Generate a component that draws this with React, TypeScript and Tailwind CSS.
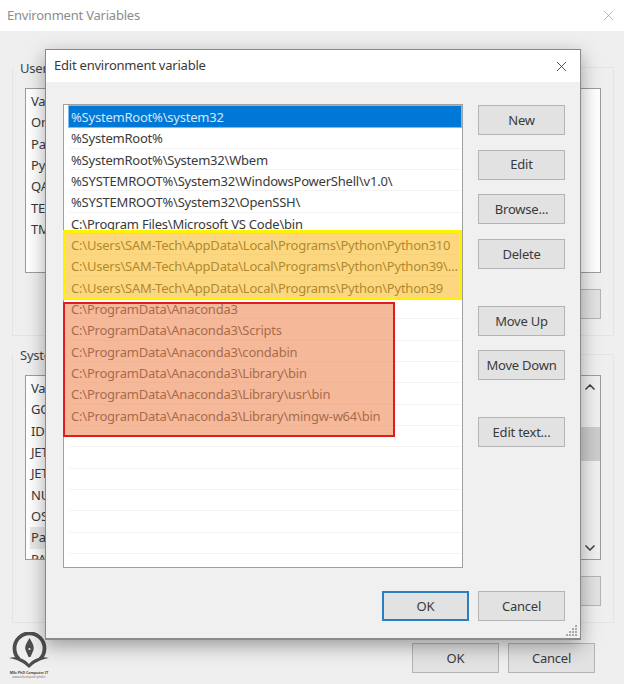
import { X, ChevronUp, ChevronDown } from 'lucide-react';

const pathRows = [
  '%SystemRoot%\\system32',
  '%SystemRoot%',
  '%SystemRoot%\\System32\\Wbem',
  '%SYSTEMROOT%\\System32\\WindowsPowerShell\\v1.0\\',
  '%SYSTEMROOT%\\System32\\OpenSSH\\',
  'C:\\Program Files\\Microsoft VS Code\\bin',
  'C:\\Users\\SAM-Tech\\AppData\\Local\\Programs\\Python\\Python310',
  'C:\\Users\\SAM-Tech\\AppData\\Local\\Programs\\Python\\Python39\\Scripts\\',
  'C:\\Users\\SAM-Tech\\AppData\\Local\\Programs\\Python\\Python39',
  'C:\\ProgramData\\Anaconda3',
  'C:\\ProgramData\\Anaconda3\\Scripts',
  'C:\\ProgramData\\Anaconda3\\condabin',
  'C:\\ProgramData\\Anaconda3\\Library\\bin',
  'C:\\ProgramData\\Anaconda3\\Library\\usr\\bin',
  'C:\\ProgramData\\Anaconda3\\Library\\mingw-w64\\bin',
  '', '', '', '', '', '',
];

const userVars = ['Variable', 'OneDrive', 'Path', 'PyCharm', 'QA', 'TEMP', 'TMP'];
const systemVars = ['Variable', 'GOPATH', 'IDEA', 'JETBRAINS', 'JETTY', 'NUMBER', 'OS', 'Path', 'PATHEXT'];

function WinButton({ label, primary, className = '' }: { label: string; primary?: boolean; className?: string }) {
  return (
    <div
      className={`flex h-[30px] w-[87px] shrink-0 items-center justify-center bg-[#e2e2e2] pt-[1px] text-[13px] tracking-[-0.22px] text-[#3a3a3a] ${
        primary ? 'border-2 border-[#2a7fc0]' : 'border border-[#b4b4b4]'
      } ${className}`}
    >
      {label}
    </div>
  );
}

function Group({ title, vars, listH, children }: { title: string; vars: string[]; listH: string; children?: React.ReactNode }) {
  return (
    <div className="relative h-[269px] border border-[#e4e4e4] px-[12px]">
      <div className="-ml-[12px] -mt-[9px] h-[18px] w-fit bg-[#efefef] px-[7px] text-[13px] leading-[18px] tracking-[-0.22px] text-[#444]">{title}</div>
      <div className={`mt-[11px] overflow-hidden border border-[#9c9c9c] bg-white pl-[4px] pt-[2px] ${listH}`}>
        {vars.map((v, i) => (
          <div key={i} className={`h-[21.33px] pl-[1px] text-[13px] leading-[21px] tracking-[-0.22px] text-[#3a3a3a] ${v === 'Path' && title === 'System variables' ? 'bg-[#e9e9e9]' : ''}`}>
            {v}
          </div>
        ))}
        {children}
      </div>
      <div className="mt-[16px] flex justify-end gap-[9px]">
        <WinButton label="New..." />
        <WinButton label="Edit..." />
        <WinButton label="Delete" />
      </div>
    </div>
  );
}

function Logo() {
  return (
    <div className="absolute left-[8px] top-[632px] flex w-[42px] flex-col items-center text-[#4a4a4a]">
      <svg width="42" height="37" viewBox="0 0 42 37" fill="none">
        <path d="M11 27 A15 15 0 1 1 32 27" stroke="#4d4d4d" strokeWidth="3.8" />
        <path d="M21.5 6 C24.5 11 26.5 14 25.5 18 L22.5 25 L20.5 25 L17.5 18 C16.5 14 18.5 11 21.5 6Z" fill="#4d4d4d" />
        <circle cx="21.5" cy="17" r="1.1" fill="#efefef" />
        <path d="M1 26 C8 24 16 26 21 32 C26 26 34 24 41 26 C34 27 27 30 21 36 C15 30 8 27 1 26Z" fill="#4d4d4d" />
      </svg>
      <div className="mt-[1px] whitespace-nowrap text-[3.6px] leading-[5px] font-bold">MSc PhD Computer IT</div>
      <div className="whitespace-nowrap text-[3.2px] leading-[4px] text-[#777]">www.ekomputerphd.ir</div>
    </div>
  );
}

export default function App() {
  return (
    <div className="relative h-[684px] w-[624px] overflow-hidden bg-[#efefef] font-['Noto_Sans','Open_Sans',sans-serif]">
      {/* back window */}
      <div className="flex h-[31px] items-center justify-between bg-white pl-[7px] pr-[7px] text-[13px] tracking-[-0.22px] text-[#8c8c8c]">
        <span>Environment Variables</span>
        <X size={17} strokeWidth={1} className="text-[#9a9a9a]" />
      </div>
      <div className="flex flex-col gap-[18px] pl-[12px] pr-[10px] pt-[36px]">
        <Group title="User variables" vars={userVars} listH="h-[185px]" />
        <Group title="System variables" vars={systemVars} listH="relative h-[185px]">
          <div className="absolute bottom-0 right-0 top-0 flex w-[20px] flex-col items-center justify-between bg-[#f0f0f0] py-[3px]">
            <ChevronUp size={16} strokeWidth={2.5} className="text-[#444]" />
            <ChevronDown size={16} strokeWidth={2.5} className="text-[#444]" />
            <div className="absolute left-0 right-0 top-[51px] h-[34px] bg-[#cdcdcd]" />
          </div>
        </Group>
      </div>
      <div className="mt-[20px] flex justify-end gap-[9px] pr-[29px]">
        <WinButton label="OK" />
        <WinButton label="Cancel" />
      </div>

      <Logo />

      {/* front dialog */}
      <div className="absolute left-[45px] top-[49px] flex h-[591px] w-[536px] flex-col border border-b-2 border-[#8a8a8a] bg-[#f0f0f0] shadow-[0_6px_18px_rgba(0,0,0,0.35)]">
        <div className="flex h-[32px] shrink-0 items-center justify-between bg-white pl-[8px] pr-[10px] text-[13px] tracking-[-0.22px] text-[#3a3a3a]">
          <span>Edit environment variable</span>
          <X size={17} strokeWidth={1.2} className="text-[#333]" />
        </div>
        <div className="flex gap-[15px] pl-[17px] pt-[22px]">
          <div className="relative h-[464px] w-[400px] shrink-0 border border-[#a0a0a0] bg-white px-[5px] pr-[1px] pt-[1px]">
            {pathRows.map((row, i) => (
              <div
                key={i}
                className={`h-[21.33px] truncate pl-[2px] pr-[3px] text-[13px] leading-[23px] tracking-[-0.22px] ${
                  i === 0 ? 'bg-[#0078d7] text-[#d5e6f5] outline outline-[#7fbce8]' : 'border-b border-[#f3f3f3] text-[#3a3a3a]'
                }`}
              >
                {row}
              </div>
            ))}
            <div className="absolute left-[-1px] top-[125px] h-[70px] w-[399px] border-[3px] border-[#fff200] bg-[#fbbc2a]/60" />
            <div className="absolute left-[-1px] top-[197px] h-[135px] w-[332px] border-2 border-[#e01c1c] bg-[#ee8a57]/60" />
          </div>
          <div className="flex flex-col gap-[14.7px] pt-[1px]">
            <WinButton label="New" />
            <WinButton label="Edit" />
            <WinButton label="Browse..." />
            <WinButton label="Delete" />
            <WinButton label="Move Up" className="mt-[22px]" />
            <WinButton label="Move Down" />
            <WinButton label="Edit text..." className="mt-[22px]" />
          </div>
        </div>
        <div className="mt-[23px] flex justify-end gap-[9px] pr-[15px]">
          <WinButton label="OK" primary />
          <WinButton label="Cancel" />
        </div>
        <svg className="absolute bottom-[1px] right-[2px]" width="12" height="12" viewBox="0 0 12 12" fill="#a8a8a8">
          <rect x="9" y="0" width="2" height="2" />
          <rect x="6" y="3" width="2" height="2" />
          <rect x="9" y="3" width="2" height="2" />
          <rect x="3" y="6" width="2" height="2" />
          <rect x="6" y="6" width="2" height="2" />
          <rect x="9" y="6" width="2" height="2" />
          <rect x="0" y="9" width="2" height="2" />
          <rect x="3" y="9" width="2" height="2" />
          <rect x="6" y="9" width="2" height="2" />
          <rect x="9" y="9" width="2" height="2" />
        </svg>
      </div>
    </div>
  );
}
